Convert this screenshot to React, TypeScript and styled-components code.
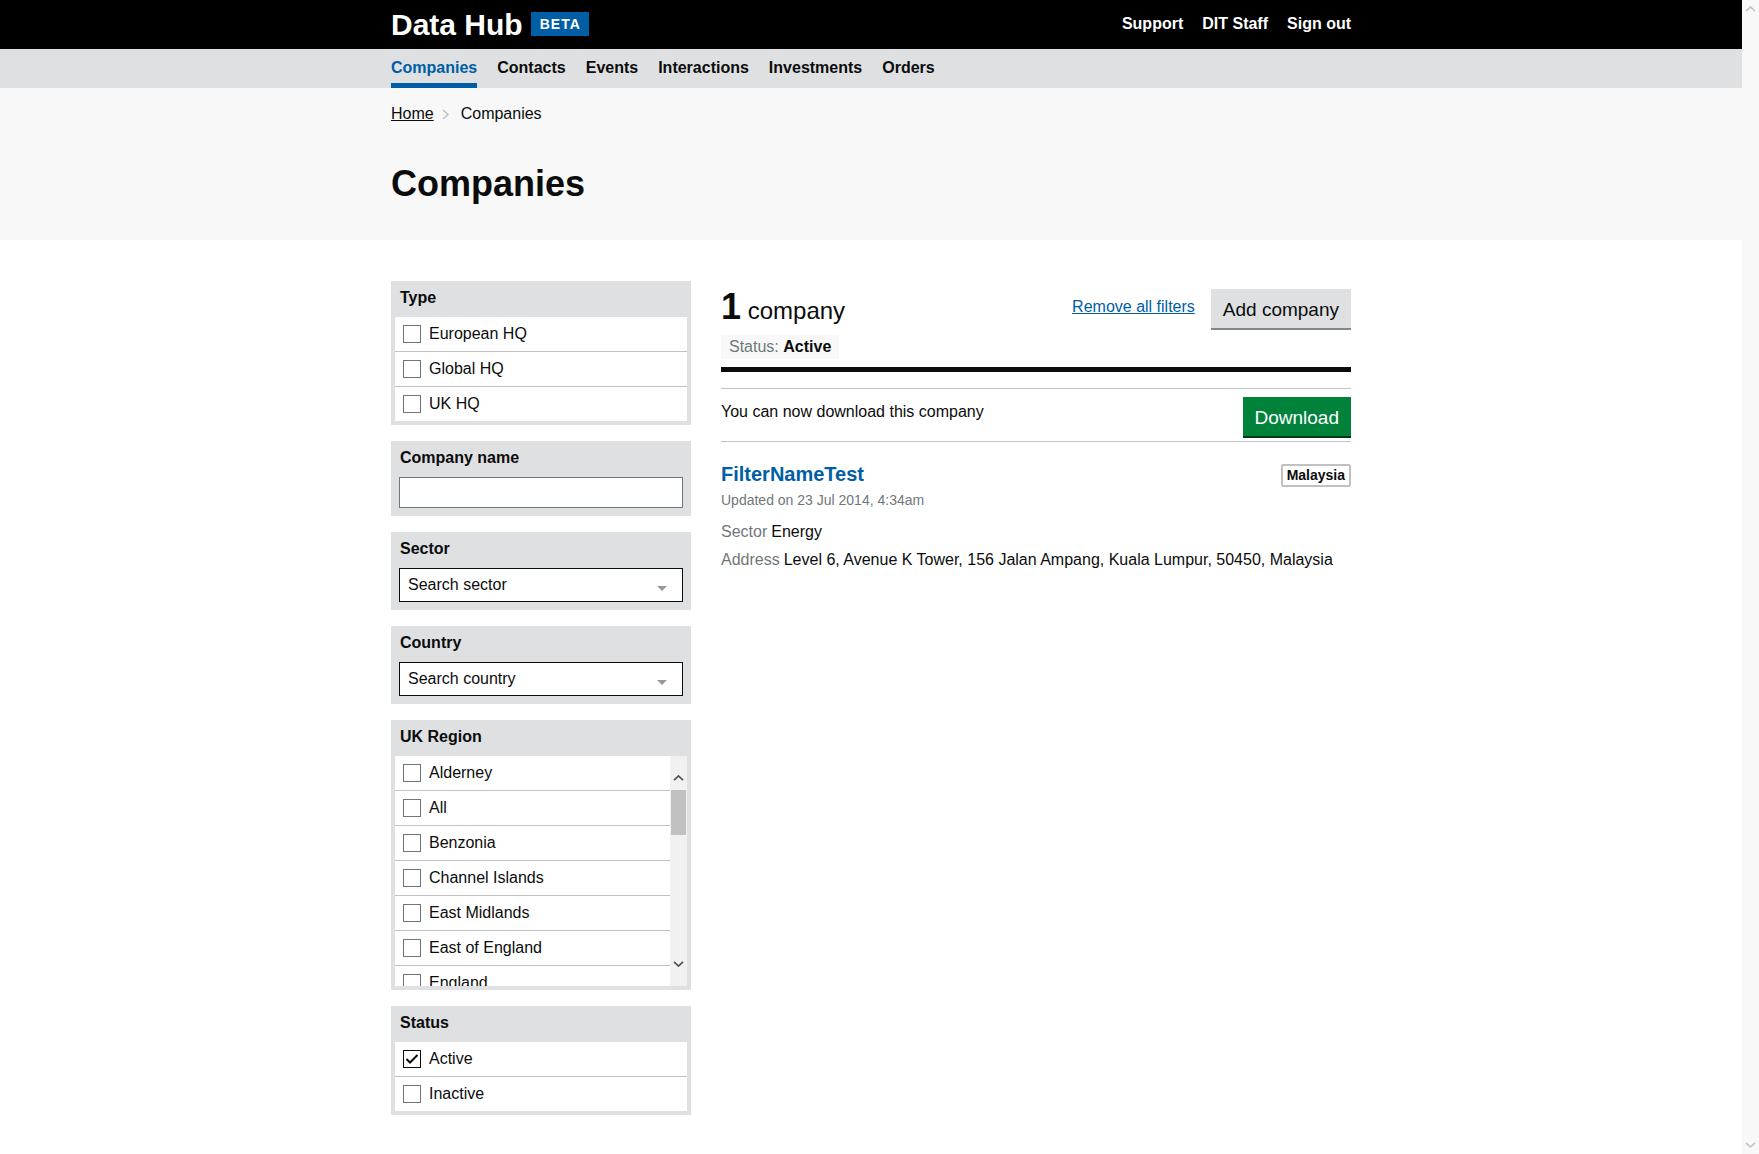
import React from 'react';
import styled, { createGlobalStyle } from 'styled-components';

const GlobalStyle = createGlobalStyle`
  * { box-sizing: border-box; }
  body {
    margin: 0;
    padding-right: 17px;
    font-family: "Liberation Sans", Arial, sans-serif;
    color: #0b0c0c;
    background: #ffffff;
    font-size: 16px;
    line-height: 20px;
  }
`;

const Container = styled.div`
  width: 960px;
  margin: 0 auto;
`;

/* ---------- Page scrollbar (drawn, sits over the right edge) ---------- */
const PageScrollbar = styled.div`
  position: fixed;
  top: 0;
  right: 0;
  bottom: 0;
  width: 17px;
  background: #f8f8f8;
  display: flex;
  flex-direction: column;
  justify-content: space-between;
  align-items: center;
  padding: 6px 0;
`;

/* ---------- Header ---------- */
const Header = styled.header`
  background: #000000;
  height: 49px;
`;

const HeaderInner = styled(Container)`
  height: 100%;
  display: flex;
  align-items: center;
  justify-content: space-between;
`;

const Logo = styled.a`
  display: flex;
  align-items: center;
  gap: 8px;
  color: #ffffff;
  text-decoration: none;
  font-weight: 700;
  font-size: 30px;
  line-height: 30px;
`;

const BetaTag = styled.span`
  display: inline-block;
  background: #005ea5;
  color: #ffffff;
  font-size: 14px;
  font-weight: 700;
  letter-spacing: 1px;
  line-height: 24px;
  height: 24px;
  padding: 0 8px 0 9px;
  margin-top: -1px;
`;

const HeaderLinks = styled.div`
  display: flex;
  gap: 19px;
  margin-bottom: 1px;
`;

const HeaderLink = styled.a`
  color: #ffffff;
  font-weight: 700;
  font-size: 16px;
  line-height: 20px;
  text-decoration: none;
`;

/* ---------- Nav ---------- */
const NavBar = styled.nav`
  background: #dee0e2;
`;

const NavInner = styled(Container)`
  display: flex;
  gap: 20px;
`;

const NavItem = styled.a<{ $active?: boolean }>`
  display: block;
  padding: 9px 0 5px;
  border-bottom: 5px solid ${(p) => (p.$active ? '#005ea5' : 'transparent')};
  color: ${(p) => (p.$active ? '#005ea5' : '#0b0c0c')};
  font-weight: 700;
  font-size: 16px;
  line-height: 20px;
  text-decoration: none;
`;

/* ---------- Hero ---------- */
const Hero = styled.div`
  background: #f8f8f8;
  padding: 16px 0 36px;
`;

const Breadcrumbs = styled.div`
  display: flex;
  align-items: center;
  font-size: 16px;
  line-height: 20px;
`;

const CrumbLink = styled.a`
  color: #0b0c0c;
  text-decoration: underline;
`;

const CrumbSep = styled.span`
  display: inline-flex;
  margin: 0 12px 0 8px;
`;

const PageTitle = styled.h1`
  margin: 40px 0 0;
  font-size: 36px;
  line-height: 40px;
  font-weight: 700;
`;

/* ---------- Main layout ---------- */
const Main = styled(Container)`
  display: grid;
  grid-template-columns: 300px 630px;
  column-gap: 30px;
  padding: 41px 0 40px;
  align-items: start;
`;

const Sidebar = styled.aside`
  display: flex;
  flex-direction: column;
  gap: 16px;
`;

const Facet = styled.fieldset`
  margin: 0;
  border: 0;
  background: #dee0e2;
  padding: 0 4px 4px;
  min-width: 0;
`;

const FacetTitle = styled.legend`
  display: block;
  float: left;
  width: 100%;
  font-size: 16px;
  font-weight: 700;
  line-height: 20px;
  padding: 7px 5px 9px;
`;

const FacetBody = styled.div`
  clear: both;
`;

const OptionList = styled.div`
  background: #ffffff;
`;

const ScrollFrame = styled.div`
  display: flex;
  height: 230px;
  background: #ffffff;
`;

const ScrollList = styled.div`
  flex: 1;
  min-width: 0;
  overflow: hidden;
`;

const ScrollTrack = styled.div`
  flex: none;
  width: 17px;
  background: #f1f1f1;
  display: flex;
  flex-direction: column;
  align-items: center;
`;

const ScrollButton = styled.div<{ $down?: boolean }>`
  flex: none;
  height: 34px;
  width: 100%;
  display: flex;
  justify-content: center;
  align-items: ${(p) => (p.$down ? 'flex-end' : 'flex-start')};
  padding: ${(p) => (p.$down ? '0 0 19px' : '19px 0 0')};
`;

const ScrollThumb = styled.div`
  flex: none;
  width: 15px;
  height: 45px;
  background: #c1c1c1;
`;

const ScrollSpacer = styled.div`
  flex: 1;
`;

const Option = styled.label`
  box-sizing: content-box;
  display: flex;
  align-items: center;
  height: 34px;
  padding: 0 8px;
  font-size: 16px;
  line-height: 20px;
  white-space: nowrap;
  & + & {
    border-top: 1px solid #bfc1c3;
  }
`;

const Box = styled.span<{ $checked?: boolean }>`
  flex: none;
  width: 18px;
  height: 18px;
  border: 1px solid ${(p) => (p.$checked ? '#0b0c0c' : '#6f777b')};
  background: #ffffff;
  margin-right: 8px;
  display: flex;
  align-items: center;
  justify-content: center;
`;

const FieldWrap = styled.div`
  padding: 0 4px 4px;
`;

const TextInput = styled.input`
  display: block;
  width: 100%;
  height: 31px;
  border: 1px solid #6f777b;
  background: #ffffff;
  font-family: inherit;
  font-size: 16px;
  padding: 0 8px;
  outline: none;
`;

const SelectBox = styled.div`
  height: 34px;
  border: 1px solid #0b0c0c;
  background: #ffffff;
  display: flex;
  align-items: center;
  justify-content: space-between;
  padding: 0 15px 0 8px;
  font-size: 16px;
  line-height: 20px;
`;

const SelectArrow = styled.svg`
  margin-top: 6px;
`;

/* ---------- Results ---------- */
const Results = styled.section``;

const ResultsHeader = styled.div`
  display: flex;
  justify-content: space-between;
  align-items: flex-start;
`;

const CountHeading = styled.h2`
  margin: 3px 0 0;
  font-size: 24px;
  font-weight: 400;
  line-height: 45px;
`;

const Count = styled.span`
  font-size: 36px;
  font-weight: 700;
`;

const StatusTag = styled.div`
  display: inline-block;
  margin-top: 2px;
  background: #f8f8f8;
  padding: 2px 8px;
  font-size: 16px;
  line-height: 20px;
`;

const MutedLabel = styled.span`
  color: #6f777b;
`;

const Strong = styled.strong`
  font-weight: 700;
`;

const Actions = styled.div`
  display: flex;
  align-items: flex-start;
  gap: 16px;
  padding-top: 8px;
`;

const TextLink = styled.a`
  margin-top: 8px;
  color: #005ea5;
  text-decoration: underline;
  font-size: 16px;
  line-height: 20px;
`;

const Button = styled.button<{ $variant?: 'primary' | 'secondary' }>`
  font-family: inherit;
  font-size: 19px;
  line-height: 1.25;
  padding: 9px 12px 6px;
  border: 0;
  border-radius: 0;
  cursor: pointer;
  background: ${(p) => (p.$variant === 'primary' ? '#00823b' : '#dee0e2')};
  color: ${(p) => (p.$variant === 'primary' ? '#ffffff' : '#0b0c0c')};
  box-shadow: 0 2px 0 ${(p) => (p.$variant === 'primary' ? '#003618' : '#858688')};
`;

const ThickRule = styled.div`
  margin-top: 8px;
  height: 5px;
  background: #0b0c0c;
`;

const DownloadBar = styled.div`
  margin-top: 16px;
  border-top: 1px solid #bfc1c3;
  border-bottom: 1px solid #bfc1c3;
  padding: 8px 0 5px;
  display: flex;
  justify-content: space-between;
  align-items: flex-start;
`;

const DownloadText = styled.p`
  margin: 5px 0 0;
  font-size: 16px;
  line-height: 20px;
`;

const ResultItem = styled.article`
  padding-top: 20px;
`;

const ResultHead = styled.div`
  display: flex;
  justify-content: space-between;
  align-items: flex-start;
`;

const ResultTitle = styled.a`
  font-size: 20px;
  line-height: 25px;
  font-weight: 700;
  color: #005ea5;
  text-decoration: none;
`;

const Badge = styled.span`
  margin-top: 2px;
  border: 2px solid #bfc1c3;
  border-radius: 2px;
  padding: 1px 4px;
  font-size: 14px;
  line-height: 17px;
  font-weight: 700;
`;

const Updated = styled.p`
  margin: 3px 0 0;
  font-size: 14px;
  line-height: 20px;
  color: #6f777b;
`;

const Details = styled.dl`
  margin: 10px 0 0;
  display: flex;
  flex-direction: column;
  gap: 4px;
`;

const DetailRow = styled.div`
  font-size: 16px;
  line-height: 24px;
`;

const DetailLabel = styled.dt`
  display: inline;
  color: #6f777b;
`;

const DetailValue = styled.dd`
  display: inline;
  margin: 0 0 0 4px;
`;

/* ---------- Data ---------- */
const typeOptions = ['European HQ', 'Global HQ', 'UK HQ'];
const regionOptions = [
  'Alderney',
  'All',
  'Benzonia',
  'Channel Islands',
  'East Midlands',
  'East of England',
  'England',
  'FDI Hub',
  'Guernsey',
  'Isle of Man',
  'Isles of Scilly',
  'Jersey',
  'London',
  'North East',
  'North West',
  'Northern Ireland',
  'Sark',
  'Scotland',
  'South East',
  'South West',
  'UKTI Dubai Hub',
  'Wales',
  'West Midlands',
  'Yorkshire and The Humber',
];

const Chevron: React.FC<{ dir: 'up' | 'down'; color: string }> = ({ dir, color }) => (
  <svg width="11" height="6" viewBox="0 0 11 6">
    <polyline
      points={dir === 'up' ? '1,5.2 5.5,1 10,5.2' : '1,0.8 5.5,5 10,0.8'}
      fill="none"
      stroke={color}
      strokeWidth="1.7"
    />
  </svg>
);

const Checkbox: React.FC<{ checked?: boolean }> = ({ checked }) => (
  <Box $checked={checked}>
    {checked && (
      <svg width="14" height="12" viewBox="0 0 14 12">
        <polyline points="1.5,6 5,9.5 12.5,2" fill="none" stroke="#0b0c0c" strokeWidth="2" />
      </svg>
    )}
  </Box>
);

const Arrow = () => (
  <SelectArrow width="10" height="5" viewBox="0 0 10 5">
    <polygon points="0,0 10,0 5,5" fill="#999999" />
  </SelectArrow>
);

export default function App() {
  return (
    <>
      <GlobalStyle />
      <Header>
        <HeaderInner>
          <Logo href="#">
            Data Hub <BetaTag>BETA</BetaTag>
          </Logo>
          <HeaderLinks>
            <HeaderLink href="#">Support</HeaderLink>
            <HeaderLink href="#">DIT Staff</HeaderLink>
            <HeaderLink href="#">Sign out</HeaderLink>
          </HeaderLinks>
        </HeaderInner>
      </Header>
      <NavBar>
        <NavInner>
          <NavItem href="#" $active>Companies</NavItem>
          <NavItem href="#">Contacts</NavItem>
          <NavItem href="#">Events</NavItem>
          <NavItem href="#">Interactions</NavItem>
          <NavItem href="#">Investments</NavItem>
          <NavItem href="#">Orders</NavItem>
        </NavInner>
      </NavBar>
      <Hero>
        <Container>
          <Breadcrumbs>
            <CrumbLink href="#">Home</CrumbLink>
            <CrumbSep>
              <svg width="7" height="11" viewBox="0 0 7 11">
                <polyline points="1,1 6,5.5 1,10" fill="none" stroke="#bfc1c3" strokeWidth="1.5" />
              </svg>
            </CrumbSep>
            <span>Companies</span>
          </Breadcrumbs>
          <PageTitle>Companies</PageTitle>
        </Container>
      </Hero>
      <Main>
        <Sidebar>
          <Facet>
            <FacetTitle>Type</FacetTitle>
            <FacetBody>
              <OptionList>
                {typeOptions.map((o) => (
                  <Option key={o}>
                    <Checkbox />
                    {o}
                  </Option>
                ))}
              </OptionList>
            </FacetBody>
          </Facet>
          <Facet>
            <FacetTitle>Company name</FacetTitle>
            <FacetBody>
              <FieldWrap>
                <TextInput type="text" />
              </FieldWrap>
            </FacetBody>
          </Facet>
          <Facet>
            <FacetTitle>Sector</FacetTitle>
            <FacetBody>
              <FieldWrap>
                <SelectBox>
                  <span>Search sector</span>
                  <Arrow />
                </SelectBox>
              </FieldWrap>
            </FacetBody>
          </Facet>
          <Facet>
            <FacetTitle>Country</FacetTitle>
            <FacetBody>
              <FieldWrap>
                <SelectBox>
                  <span>Search country</span>
                  <Arrow />
                </SelectBox>
              </FieldWrap>
            </FacetBody>
          </Facet>
          <Facet>
            <FacetTitle>UK Region</FacetTitle>
            <FacetBody>
              <ScrollFrame>
                <ScrollList>
                  {regionOptions.map((o) => (
                    <Option key={o}>
                      <Checkbox />
                      {o}
                    </Option>
                  ))}
                </ScrollList>
                <ScrollTrack>
                  <ScrollButton>
                    <Chevron dir="up" color="#505050" />
                  </ScrollButton>
                  <ScrollThumb />
                  <ScrollSpacer />
                  <ScrollButton $down>
                    <Chevron dir="down" color="#505050" />
                  </ScrollButton>
                </ScrollTrack>
              </ScrollFrame>
            </FacetBody>
          </Facet>
          <Facet>
            <FacetTitle>Status</FacetTitle>
            <FacetBody>
              <OptionList>
                <Option>
                  <Checkbox checked />
                  Active
                </Option>
                <Option>
                  <Checkbox />
                  Inactive
                </Option>
              </OptionList>
            </FacetBody>
          </Facet>
        </Sidebar>
        <Results>
          <ResultsHeader>
            <div>
              <CountHeading>
                <Count>1</Count> company
              </CountHeading>
              <StatusTag>
                <MutedLabel>Status:</MutedLabel> <Strong>Active</Strong>
              </StatusTag>
            </div>
            <Actions>
              <TextLink href="#">Remove all filters</TextLink>
              <Button $variant="secondary">Add company</Button>
            </Actions>
          </ResultsHeader>
          <ThickRule />
          <DownloadBar>
            <DownloadText>You can now download this company</DownloadText>
            <Button $variant="primary">Download</Button>
          </DownloadBar>
          <ResultItem>
            <ResultHead>
              <ResultTitle href="#">FilterNameTest</ResultTitle>
              <Badge>Malaysia</Badge>
            </ResultHead>
            <Updated>Updated on 23 Jul 2014, 4:34am</Updated>
            <Details>
              <DetailRow>
                <DetailLabel>Sector</DetailLabel>
                <DetailValue>Energy</DetailValue>
              </DetailRow>
              <DetailRow>
                <DetailLabel>Address</DetailLabel>
                <DetailValue>Level 6, Avenue K Tower, 156 Jalan Ampang, Kuala Lumpur, 50450, Malaysia</DetailValue>
              </DetailRow>
            </Details>
          </ResultItem>
        </Results>
      </Main>
      <PageScrollbar aria-hidden>
        <Chevron dir="up" color="#c4c4c4" />
        <Chevron dir="down" color="#c4c4c4" />
      </PageScrollbar>
    </>
  );
}
